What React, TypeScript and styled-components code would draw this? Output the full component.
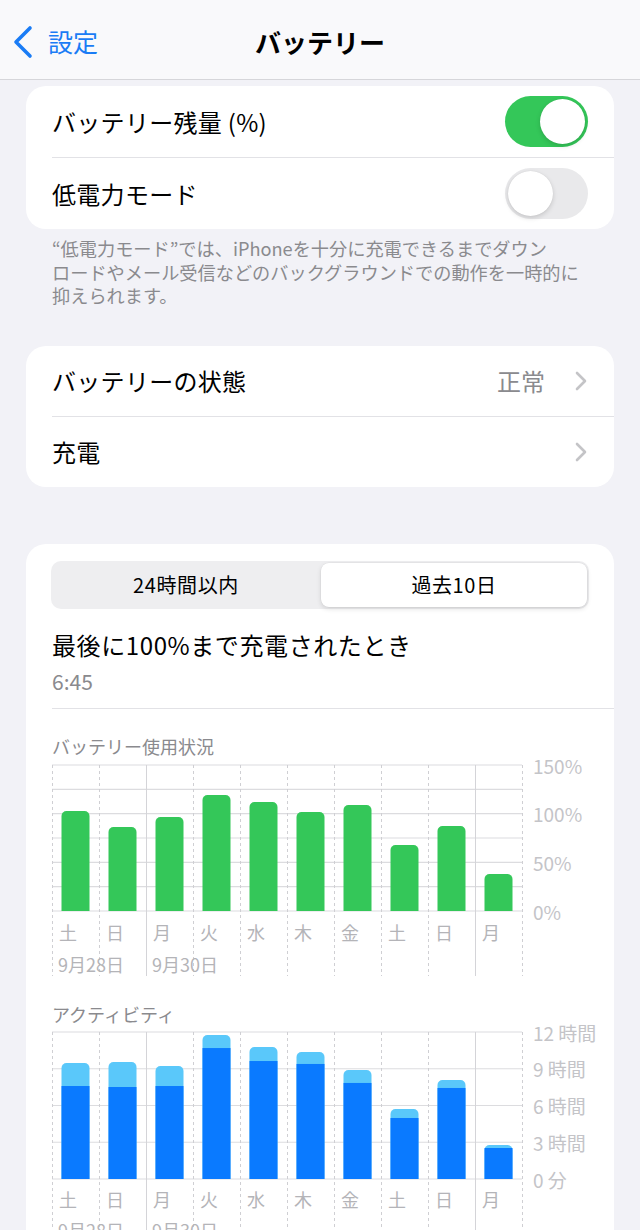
import React from 'react';
import styled, { createGlobalStyle } from 'styled-components';

const GlobalStyle = createGlobalStyle`
  html, body {
    margin: 0;
    padding: 0;
    background: #f2f2f7;
    font-family: "Noto Sans CJK JP", "Noto Sans", sans-serif;
    color: #000;
  }
`;

type Bar = { main: number; extra?: number };

const DAYS = ['土', '日', '月', '火', '水', '木', '金', '土', '日', '月'];
const COL = 47;

const usage: Bar[] = [
  { main: 102.7 }, { main: 86.3 }, { main: 96.6 }, { main: 119.2 }, { main: 112 },
  { main: 101.7 }, { main: 108.9 }, { main: 67.8 }, { main: 87.3 }, { main: 38 },
];

const activity: Bar[] = [
  { main: 7.59, extra: 9.47 }, { main: 7.51, extra: 9.55 }, { main: 7.59, extra: 9.22 },
  { main: 10.69, extra: 11.76 }, { main: 9.63, extra: 10.78 }, { main: 9.39, extra: 10.37 },
  { main: 7.84, extra: 8.9 }, { main: 4.98, extra: 5.71 }, { main: 7.43, extra: 8.08 },
  { main: 2.53, extra: 2.78 },
];

const topRounded = (x: number, top: number, w: number, bottom: number, r: number) =>
  `M${x},${bottom} V${top + r} A${r},${r} 0 0 1 ${x + r},${top} H${x + w - r} A${r},${r} 0 0 1 ${x + w},${top + r} V${bottom} Z`;

type ChartProps = {
  bars: Bar[];
  max: number;
  steps: number;
  labels: { at: number; text: string }[];
  plotTop: number;
  plotHeight: number;
  dayY: number;
  dateY: number;
  height: number;
  mainColor: string;
  extraColor?: string;
};

const Chart: React.FC<ChartProps> = ({
  bars, max, steps, labels, plotTop, plotHeight, dayY, dateY, height, mainColor, extraColor,
}) => {
  const bottom = plotTop + plotHeight;
  const width = COL * DAYS.length;
  const y = (v: number) => bottom - (v / max) * plotHeight;
  return (
    <ChartSvg width={562} height={height} viewBox={`0 0 562 ${height}`}>
      {Array.from({ length: steps + 1 }).map((_, i) => {
        const ly = plotTop + (plotHeight / steps) * i;
        return <line key={i} x1={0} x2={width} y1={ly} y2={ly} stroke="#dcdcdf" strokeWidth={1.2} />;
      })}
      {Array.from({ length: DAYS.length + 1 }).map((_, i) => {
        const lx = i * COL + 0.5;
        const solid = i === 2 || i === 9;
        return (
          <line
            key={i}
            x1={lx}
            x2={lx}
            y1={plotTop}
            y2={height - 27}
            stroke={solid ? '#d4d4d8' : '#cfcfd3'}
            strokeWidth={1}
            strokeDasharray={solid ? undefined : '3 3'}
          />
        );
      })}
      {bars.map((b, i) => {
        const x = i * COL + 9.5;
        return (
          <g key={i}>
            {b.extra !== undefined && extraColor && (
              <path d={topRounded(x, y(b.extra), 28, bottom, 5)} fill={extraColor} />
            )}
            {b.extra !== undefined ? (
              <rect x={x} y={y(b.main)} width={28} height={bottom - y(b.main)} fill={mainColor} />
            ) : (
              <path d={topRounded(x, y(b.main), 28, bottom, 5)} fill={mainColor} />
            )}
          </g>
        );
      })}
      {DAYS.map((d, i) => (
        <AxisText key={i} x={i * COL + 7} y={dayY} dominantBaseline="central">
          {d}
        </AxisText>
      ))}
      <AxisText x={6} y={dateY} dominantBaseline="central">9月28日</AxisText>
      <AxisText x={2 * COL + 6} y={dateY} dominantBaseline="central">9月30日</AxisText>
      {labels.map((l) => (
        <ScaleText key={l.text} x={481} y={y(l.at)} dominantBaseline="central">
          {l.text}
        </ScaleText>
      ))}
    </ChartSvg>
  );
};

const Toggle: React.FC<{ on?: boolean }> = ({ on }) => (
  <Switch $on={on}>
    <Knob $on={on} />
  </Switch>
);

const Chevron = () => (
  <svg width="12" height="20" viewBox="0 0 12 20">
    <polyline points="2,2 10,10 2,18" fill="none" stroke="#c4c4c7" strokeWidth="2.6" strokeLinecap="round" strokeLinejoin="round" />
  </svg>
);

const App: React.FC = () => (
  <>
    <GlobalStyle />
    <Page>
      <NavBar>
        <Back>
          <svg width="22" height="34" viewBox="0 0 22 34">
            <polyline points="18,3 4,17 18,31" fill="none" stroke="#1a7cf5" strokeWidth="3.6" strokeLinecap="round" strokeLinejoin="round" />
          </svg>
          <span>設定</span>
        </Back>
        <Title>バッテリー</Title>
        <span />
      </NavBar>

      <Card $first>
        <Row>
          <Label>バッテリー残量 (%)</Label>
          <Toggle on />
        </Row>
        <Row>
          <Label>低電力モード</Label>
          <Toggle />
        </Row>
      </Card>
      <Footnote>
        “低電力モード”では、iPhoneを十分に充電できるまでダウン
        <br />
        ロードやメール受信などのバックグラウンドでの動作を一時的に
        <br />
        抑えられます。
      </Footnote>

      <Card $gap={38}>
        <Row $h={70}>
          <Label>バッテリーの状態</Label>
          <Trail>
            <Value>正常</Value>
            <Chevron />
          </Trail>
        </Row>
        <Row $h={70}>
          <Label>充電</Label>
          <Trail>
            <Chevron />
          </Trail>
        </Row>
      </Card>

      <StatsCard $gap={57}>
        <Segmented>
          <Segment>24時間以内</Segment>
          <Segment $active>過去10日</Segment>
        </Segmented>
        <Heading>最後に100%まで充電されたとき</Heading>
        <Time>6:45</Time>
        <Divider />
        <SectionTitle>バッテリー使用状況</SectionTitle>
        <Chart
          bars={usage}
          max={150}
          steps={6}
          labels={[
            { at: 150, text: '150%' },
            { at: 100, text: '100%' },
            { at: 50, text: '50%' },
            { at: 0, text: '0%' },
          ]}
          plotTop={8}
          plotHeight={146}
          dayY={175}
          dateY={207}
          height={246}
          mainColor="#34c759"
        />
        <SectionTitle $tight>アクティビティ</SectionTitle>
        <Chart
          bars={activity}
          max={12}
          steps={4}
          labels={[
            { at: 12, text: '12 時間' },
            { at: 9, text: '9 時間' },
            { at: 6, text: '6 時間' },
            { at: 3, text: '3 時間' },
            { at: 0, text: '0 分' },
          ]}
          plotTop={7}
          plotHeight={147}
          dayY={174}
          dateY={205}
          height={246}
          mainColor="#0a7aff"
          extraColor="#5ac8fa"
        />
      </StatsCard>
    </Page>
  </>
);

export default App;

const Page = styled.div`
  width: 640px;
  min-height: 1230px;
  padding-bottom: 40px;
`;

const NavBar = styled.div`
  height: 80px;
  background: #f9f9fb;
  border-bottom: 1px solid #d6d6da;
  display: grid;
  grid-template-columns: 1fr auto 1fr;
  align-items: center;
  box-sizing: border-box;
`;

const Back = styled.div`
  display: flex;
  align-items: center;
  gap: 14px;
  padding-left: 12px;
  color: #1a7cf5;
  font-size: 25px;
  line-height: 1;
  padding-top: 4px;
`;

const Title = styled.div`
  font-size: 26px;
  font-weight: 700;
  padding-top: 4px;
`;

const Card = styled.div<{ $first?: boolean; $gap?: number }>`
  margin: ${(p) => (p.$first ? 6 : p.$gap ?? 40)}px 26px 0;
  background: #fff;
  border-radius: 20px;
  overflow: hidden;
`;

const Row = styled.div<{ $h?: number }>`
  height: ${(p) => p.$h ?? 71}px;
  margin-left: 26px;
  padding-right: 26px;
  display: flex;
  align-items: center;
  justify-content: space-between;
  & + & {
    border-top: 1px solid #e2e2e6;
  }
`;

const Label = styled.div`
  font-size: 24px;
  letter-spacing: 0.3px;
`;

const Trail = styled.div`
  display: flex;
  align-items: center;
  gap: 30px;
  padding-right: 1px;
`;

const Value = styled.div`
  font-size: 24px;
  color: #8a8a8e;
`;

const Switch = styled.div<{ $on?: boolean }>`
  width: 83px;
  height: 51px;
  border-radius: 26px;
  background: ${(p) => (p.$on ? '#34c759' : '#e9e9eb')};
  display: flex;
  align-items: center;
  justify-content: ${(p) => (p.$on ? 'flex-end' : 'flex-start')};
  padding: 0 3px;
  box-sizing: border-box;
`;

const Knob = styled.div<{ $on?: boolean }>`
  width: 45px;
  height: 45px;
  border-radius: 50%;
  background: #fff;
  box-shadow: 0 2px 5px rgba(0, 0, 0, 0.15), 0 0 1px rgba(0, 0, 0, 0.1);
`;

const Footnote = styled.div`
  margin-top: 8px;
  padding-left: 52px;
  font-size: 18.2px;
  line-height: 23.5px;
  color: #8a8a8e;
`;

const StatsCard = styled(Card)`
  padding: 17px 0 0;
  border-radius: 20px 20px 0 0;
`;

const Segmented = styled.div`
  margin: 0 25px;
  height: 48px;
  padding: 2px;
  box-sizing: border-box;
  border-radius: 10px;
  background: #eeeef0;
  display: grid;
  grid-template-columns: 1fr 1fr;
  gap: 2px;
`;

const Segment = styled.div<{ $active?: boolean }>`
  display: flex;
  align-items: center;
  justify-content: center;
  font-size: 20px;
  letter-spacing: 0.6px;
  font-weight: 400;
  border-radius: 8px;
  background: ${(p) => (p.$active ? '#fff' : 'transparent')};
  box-shadow: ${(p) => (p.$active ? '0 2px 5px rgba(0,0,0,0.12), 0 0 0 0.5px rgba(0,0,0,0.05)' : 'none')};
`;

const Heading = styled.div`
  margin: 21px 0 0 26px;
  font-size: 24px;
  letter-spacing: 0.6px;
  line-height: 30px;
`;

const Time = styled.div`
  margin: 9px 0 0 26px;
  font-size: 21px;
  line-height: 24px;
  color: #8a8a8e;
`;

const Divider = styled.div`
  margin: 15px 0 0 26px;
  height: 1px;
  background: #e2e2e6;
`;

const SectionTitle = styled.div<{ $tight?: boolean }>`
  margin: ${(p) => (p.$tight ? '0' : '26px')} 0 0 26px;
  font-size: 18px;
  line-height: 22px;
  color: #8a8a8e;
`;

const ChartSvg = styled.svg`
  display: block;
  margin-left: 26px;
  overflow: visible;
`;

const AxisText = styled.text`
  font-size: 18px;
  fill: #b4b4b8;
`;

const ScaleText = styled.text`
  font-size: 19px;
  fill: #c4c4c8;
`;
